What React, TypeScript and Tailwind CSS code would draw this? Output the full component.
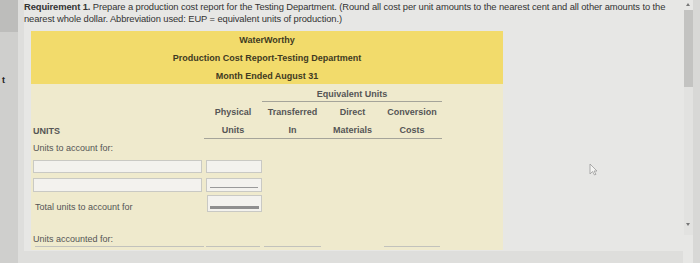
import React from "react";

const cols = "grid grid-cols-[173px_58px_61px_59px_60px_1fr]";

function Box({ mark }: { mark?: "single" | "double" }) {
  return (
    <div className="relative h-full w-full border border-[#c9c9c4] bg-[#f3f2ee]">
      {mark === "single" && <div className="absolute bottom-[3px] left-[3px] right-[3px] h-px bg-[#9a9a9a]" />}
      {mark === "double" && <div className="absolute bottom-[2px] left-[2px] right-[2px] h-[3px] bg-[#8f8f8f]" />}
    </div>
  );
}

export default function App() {
  return (
    <div className="flex h-[263px] w-[700px] overflow-hidden bg-[#e7e7e5] font-['Liberation_Sans',Arial,sans-serif] text-[#3d3d3d]">
      {/* left edge of the other window */}
      <div className="flex w-[18px] flex-col bg-[#cfcfcd]">
        <div className="h-[32px] bg-[#bdbdbb]" />
        <div className="mt-[42px] pl-[2px] text-[9px] font-bold text-[#222]">t</div>
      </div>
      <div className="w-[6px] bg-[#dededc]" />

      {/* main */}
      <div className="flex w-[659px] flex-col">
        <p className="mt-[1px] w-[650px] text-[9.4px] leading-[12px] tracking-[-0.1px] text-[#333]">
          <span className="font-bold">Requirement 1.</span> Prepare a production cost report for the Testing Department. (Round all cost per unit amounts to the nearest cent and all other amounts to the
          <br />
          nearest whole dollar. Abbreviation used: EUP = equivalent units of production.)
        </p>

        <div className="ml-[7px] mt-[6px] w-[472px]">
          {/* yellow header */}
          <div className="flex h-[53px] flex-col items-center justify-center gap-[7px] bg-[#f2db6b] pt-[2px] text-[9px] font-bold leading-[11px] text-[#3f3a22]">
            <div>WaterWorthy</div>
            <div>Production Cost Report-Testing Department</div>
            <div>Month Ended August 31</div>
          </div>

          {/* cream body */}
          <div className="h-[166px] bg-[#efeacd] text-[9px] leading-[10px] text-[#555]">
            <div className={`${cols} h-[18px] items-end`}>
              <div />
              <div />
              <div className="col-span-3 border-b border-[#a5a49a] pb-[2px] text-center font-bold">Equivalent Units</div>
            </div>
            <div className={`${cols} h-[16px] items-end pb-[1px] font-bold`}>
              <div />
              <div className="text-center">Physical</div>
              <div className="text-center">Transferred</div>
              <div className="text-center">Direct</div>
              <div className="text-center">Conversion</div>
            </div>
            <div className={`${cols} h-[21px] font-bold`}>
              <div className="flex items-center pl-[2px] pt-[5px]">UNITS</div>
              <div className="flex items-center justify-center border-b border-[#a5a49a] pt-[3px]">Units</div>
              <div className="flex items-center justify-center border-b border-[#a5a49a] pt-[3px]">In</div>
              <div className="flex items-center justify-center border-b border-[#a5a49a] pt-[3px]">Materials</div>
              <div className="flex items-center justify-center border-b border-[#a5a49a] pt-[3px]">Costs</div>
            </div>
            <div className="flex h-[17px] items-center pl-[2px] pt-[1px]">Units to account for:</div>
            <div className={`${cols} mt-[4px] h-[13px]`}>
              <div className="pl-[2px] pr-[2px]"><Box /></div>
              <div className="pl-[2px]"><Box /></div>
            </div>
            <div className={`${cols} mt-[5px] h-[14px]`}>
              <div className="pl-[2px] pr-[2px]"><Box /></div>
              <div className="pl-[2px]"><Box mark="single" /></div>
            </div>
            <div className={`${cols} mt-[3px] h-[17px]`}>
              <div className="flex items-end pl-[4px]">Total units to account for</div>
              <div className="pl-[3px]"><Box mark="double" /></div>
            </div>
            <div className="flex h-[34px] items-end pl-[2px] pb-[2px]">Units accounted for:</div>
            <div className={`${cols} h-[4px]`}>
              <div className="ml-[4px] border-t border-[#c2c2bc]" />
              <div className="mx-[2px] border-t border-[#c2c2bc]" />
              <div className="mx-[2px] border-t border-[#c2c2bc]" />
              <div />
              <div className="mx-[2px] border-t border-[#c2c2bc]" />
            </div>
          </div>
        </div>
        <div className="mt-auto h-[12px] bg-[#dededc]" />
      </div>

      {/* scrollbar */}
      <div className="relative flex w-[17px] flex-col bg-[#e7e7e5]">
        <div className="flex w-[10px] flex-col items-center">
          <div className="mt-[3px] h-0 w-0 border-x-[2px] border-b-[3px] border-x-transparent border-b-[#777]" />
          <div className="mt-[4px] h-[77px] w-[9px] bg-[#c3c3c1]" />
          <div className="h-[148px] w-[9px] bg-[#e2e2e0]" />
          <div className="mt-[-12px] h-0 w-0 border-x-[2px] border-t-[3px] border-x-transparent border-t-[#777]" />
        </div>
        <div className="absolute right-0 top-0 h-full w-[7px] bg-[#d8d8d6]" />
      </div>

      {/* mouse cursor */}
      <svg className="absolute left-[589px] top-[163px]" width="9" height="13" viewBox="0 0 9 13">
        <path d="M1 1 L1 11 L3.5 8.5 L5.5 12 L7 11.3 L5 8 L8 8 Z" fill="#f4f4f2" stroke="#9a9a9a" strokeWidth="0.8" />
      </svg>
    </div>
  );
}
